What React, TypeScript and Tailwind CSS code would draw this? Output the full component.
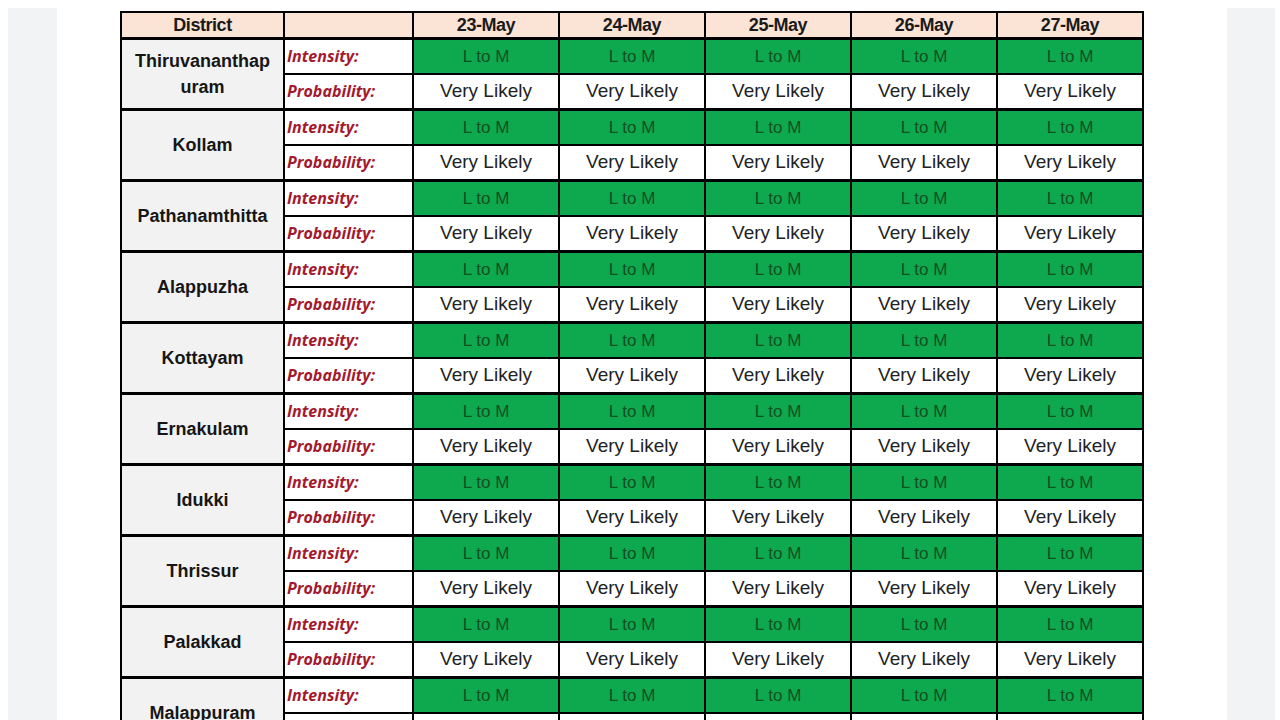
const districts = [
  ["Thiruvananthap", "uram"],
  ["Kollam"],
  ["Pathanamthitta"],
  ["Alappuzha"],
  ["Kottayam"],
  ["Ernakulam"],
  ["Idukki"],
  ["Thrissur"],
  ["Palakkad"],
  ["Malappuram"],
  ["Kozhikode"],
];

const dates = ["23-May", "24-May", "25-May", "26-May", "27-May"];

export default function App() {
  return (
    <div className="h-[720px] overflow-hidden bg-white flex pl-2 pt-2" style={{ fontFamily: '"Liberation Sans", Arial, sans-serif' }}>
      <div className="w-[49px] shrink-0 bg-[#f2f3f5]" />
      <div className="ml-[63px] mt-[3px] shrink-0">
        <table className="border-collapse table-fixed w-[1022px]">
          <colgroup>
            <col className="w-[163px]" />
            <col className="w-[129px]" />
            {dates.map((d) => (
              <col key={d} className="w-[146px]" />
            ))}
          </colgroup>
          <thead>
            <tr className="h-[26px] bg-[#fbe3d5]">
              <th className="border-2 border-black text-[18px] font-bold text-[#1a1a1a] leading-none tracking-tight">District</th>
              <th className="border-2 border-black"></th>
              {dates.map((d) => (
                <th key={d} className="border-2 border-black text-[18px] font-bold text-[#1a1a1a] leading-none tracking-tight">
                  {d}
                </th>
              ))}
            </tr>
          </thead>
          <tbody>
            {districts.map((lines) => (
              <>
                <tr key={lines[0] + "-i"} className="h-[36px]">
                  <td
                    rowSpan={2}
                    className="border-2 border-t-[3px] border-black bg-[#f2f2f2] text-center text-[18px] font-bold text-[#161616] leading-[26px] px-1"
                  >
                    {lines.map((l, i) => (
                      <div key={i}>{l}</div>
                    ))}
                  </td>
                  <td className="border-2 border-t-[3px] border-black bg-white pl-[2px] text-[16px] font-bold italic text-[#a31a2e]" style={{ fontFamily: '"Open Sans", sans-serif' }}>
                    Intensity:
                  </td>
                  {dates.map((d) => (
                    <td key={d} className="border-2 border-t-[3px] border-black bg-[#0ea84e] text-center text-[17px] text-[#11501f]">
                      L to M
                    </td>
                  ))}
                </tr>
                <tr key={lines[0] + "-p"} className="h-[35px]">
                  <td className="border-2 border-black bg-white pl-[2px] text-[16px] font-bold italic text-[#a31a2e]" style={{ fontFamily: '"Open Sans", sans-serif' }}>
                    Probability:
                  </td>
                  {dates.map((d) => (
                    <td key={d} className="border-2 border-black bg-white text-center text-[19px] text-[#222]">
                      Very Likely
                    </td>
                  ))}
                </tr>
              </>
            ))}
          </tbody>
        </table>
      </div>
      <div className="ml-[83px] w-[48px] shrink-0 bg-[#f2f3f5]" />
    </div>
  );
}
